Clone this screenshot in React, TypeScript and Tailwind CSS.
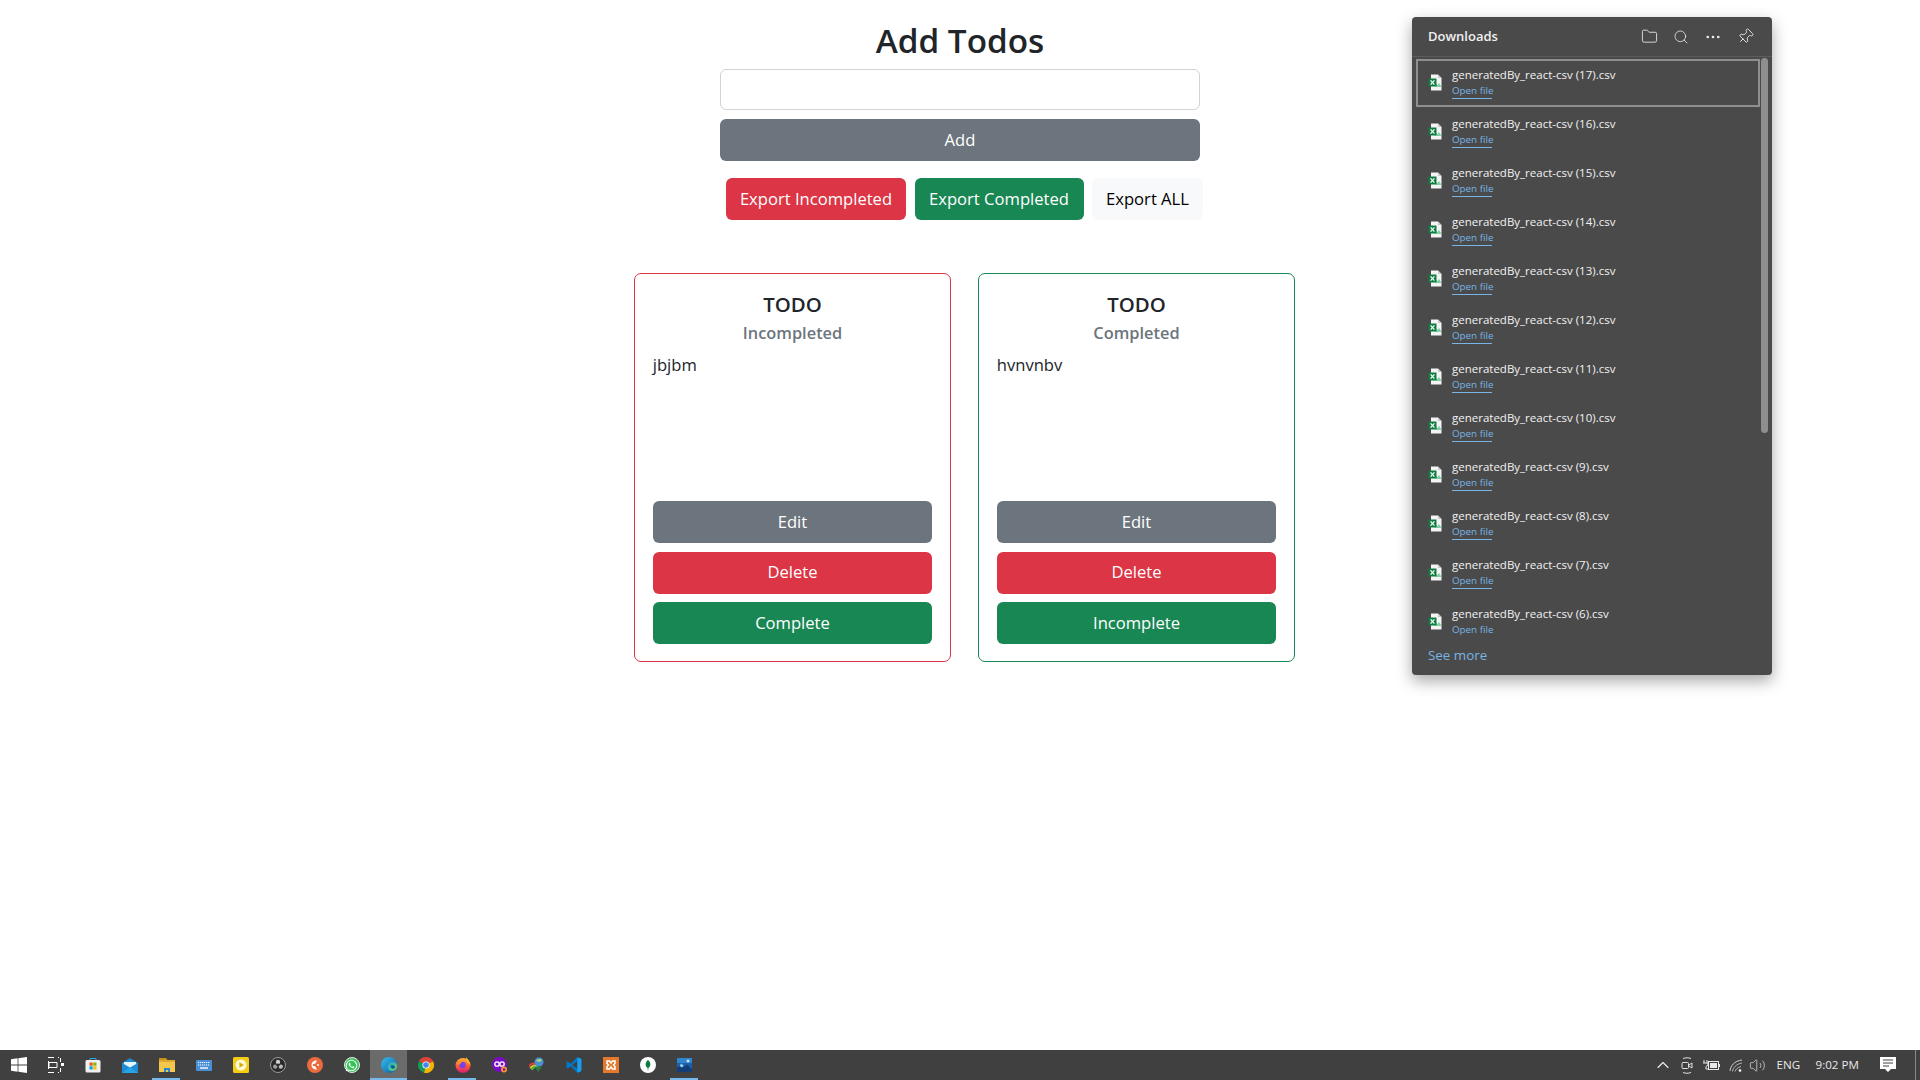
import React from "react";
import { FaWhatsapp } from "react-icons/fa";
import { Folder, Search, MoreHorizontal, Pin, ChevronUp, Volume2 } from "lucide-react";

const font = "font-['Open_Sans','Noto_Sans',sans-serif]";

function Btn({ bg, children }: { bg: string; children: React.ReactNode }) {
  return (
    <button className={`w-full h-[42px] rounded-[6px] text-white text-[16.6px] flex items-center justify-center ${bg}`}>
      {children}
    </button>
  );
}

function Card({ border, sub, item, last }: { border: string; sub: string; item: string; last: string }) {
  return (
    <div className={`w-[316.5px] h-[389px] rounded-[7px] border px-[17.5px] pt-[15px] pb-[17px] flex flex-col ${border}`}>
      <div className="text-center text-[20.4px] leading-[30px] font-semibold text-[#212529]">TODO</div>
      <div className="text-center text-[16.4px] leading-[27px] font-semibold text-[#6c757d]">{sub}</div>
      <div className="mt-[6px] text-[16.6px] leading-[26px] text-[#212529]">{item}</div>
      <div className="mt-auto flex flex-col gap-[8.5px]">
        <Btn bg="bg-[#6c757d]">Edit</Btn>
        <Btn bg="bg-[#dc3545]">Delete</Btn>
        <Btn bg="bg-[#198754]">{last}</Btn>
      </div>
    </div>
  );
}

function ExcelIcon() {
  return (
    <svg width="14" height="17" viewBox="0 0 14 17" className="shrink-0">
      <path d="M3 0.5h7l3.5 3.5v12.5H3z" fill="#f4f4f4" />
      <path d="M10 0.5v3.5h3.5z" fill="#c8c8c8" />
      <path d="M7.5 9l2 2 1.5-2 2 3v1H7.5z" fill="#7fd0a4" />
      <rect x="0.5" y="4.5" width="8" height="8" fill="#107c41" />
      <path d="M2.6 6.3l3.8 4.4M6.4 6.3l-3.8 4.4" stroke="#fff" strokeWidth="1.2" />
    </svg>
  );
}

function DownloadRow({ n, focused, underline }: { n: number; focused?: boolean; underline: boolean }) {
  return (
    <div className="relative h-[49px] w-[344px] flex items-start pl-[12px]">
      {focused && <div className="absolute left-0 top-0 w-[344px] h-[48px] border-2 border-[#8f8f8f]" />}
      <div className="mt-[15px]"><ExcelIcon /></div>
      <div className="ml-[10px] mt-[7px]">
        <div className="text-[11.5px] leading-[18px] text-[#f2f2f2] whitespace-nowrap">generatedBy_react-csv ({n}).csv</div>
        <div className={`w-[40px] text-[9.8px] leading-[14px] text-[#78b4e4] whitespace-nowrap ${underline ? "border-b border-[#78b4e4]" : ""}`}>Open file</div>
      </div>
    </div>
  );
}

function Slot({ active, hi, children }: { active?: boolean; hi?: boolean; children: React.ReactNode }) {
  return (
    <div className={`relative w-[37px] h-[30px] flex items-center justify-center shrink-0 ${hi ? "bg-[#6b6b6b]" : ""}`}>
      {children}
      {active && <div className={`absolute bottom-0 h-[2px] bg-[#76b9ed] ${hi ? "left-0 right-0" : "left-[4px] right-[5px]"}`} />}
    </div>
  );
}

function TaskIcons() {
  return (
    <>
      <Slot>
        <svg width="16" height="16" viewBox="0 0 16 16" fill="#fff"><path d="M0 2.2L6.6 1.3V7.6H0zM7.4 1.2L16 0V7.6H7.4zM0 8.4H6.6V14.7L0 13.8zM7.4 8.4H16V16L7.4 14.8z" /></svg>
      </Slot>
      <Slot>
        <svg width="16" height="16" viewBox="0 0 16 16" fill="none" stroke="#fff"><path d="M0 .5h6M10 .5h1M0 15.5h6M10 15.5h1M1 5.5h8v5H1zM.5 4v8M12.5 1v4M12.5 11v4" /><rect x="13" y="6" width="3" height="3" fill="#fff" stroke="none" /></svg>
      </Slot>
      <Slot>
        <svg width="16" height="16" viewBox="0 0 16 16"><path d="M5 3V1.5h6V3" stroke="#29a8e0" fill="none" /><rect x="0.5" y="3" width="15" height="12.5" rx="1.5" fill="#f0f0f0" /><rect x="4.5" y="5.5" width="3.2" height="3.2" fill="#f25022" /><rect x="8.3" y="5.5" width="3.2" height="3.2" fill="#7fba00" /><rect x="4.5" y="9.3" width="3.2" height="3.2" fill="#00a4ef" /><rect x="8.3" y="9.3" width="3.2" height="3.2" fill="#ffb900" /></svg>
      </Slot>
      <Slot>
        <svg width="16" height="15" viewBox="0 0 16 15"><path d="M0 5L8 0l8 5v10H0z" fill="#1e88d2" /><path d="M0 5h16v10H0z" fill="#27a3e6" /><path d="M0 5l8 5 8-5v10L8 9 0 15z" fill="#1578c2" opacity=".55" /><path d="M2 4h12v2L8 9.5 2 6z" fill="#e8f4fc" /></svg>
      </Slot>
      <Slot active>
        <svg width="16" height="16" viewBox="0 0 16 16"><path d="M0 1h7l1.5 2H0z" fill="#c98f1d" /><rect y="3" width="16" height="12" fill="#f4c84b" /><rect y="3" width="16" height="2" fill="#e0a92c" /><path d="M5 15v-4h6v4H9v-2H7v2z" fill="#2a86d1" /></svg>
      </Slot>
      <Slot>
        <svg width="16" height="11" viewBox="0 0 16 11"><rect x="0" y="0" width="16" height="11" rx="1" fill="#4a90d9" /><path d="M2 2.5h12M2 5h12" stroke="#fff" strokeDasharray="1.2 .8" /><path d="M4 8h8" stroke="#fff" strokeWidth="1.4" /></svg>
      </Slot>
      <Slot>
        <svg width="16" height="16" viewBox="0 0 16 16"><rect width="16" height="16" rx="1.5" fill="#f3cc13" /><circle cx="8" cy="8" r="5.5" fill="#fdf8d8" /><path d="M6.4 5.3L11 8l-4.6 2.7z" fill="#d9ac00" /></svg>
      </Slot>
      <Slot>
        <svg width="16" height="16" viewBox="0 0 16 16"><circle cx="8" cy="8" r="7.5" fill="#2a2a2a" stroke="#9a9a9a" /><circle cx="8" cy="5" r="2.2" fill="#cfcfcf" /><circle cx="5.2" cy="9.6" r="2.2" fill="#9f9f9f" /><circle cx="10.8" cy="9.6" r="2.2" fill="#bcbcbc" /><circle cx="8" cy="8" r="1.6" fill="#2a2a2a" /></svg>
      </Slot>
      <Slot>
        <svg width="16" height="16" viewBox="0 0 16 16"><circle cx="8" cy="8" r="8" fill="#ed6a3f" /><path d="M10 3.5A4.6 4.6 0 1 0 10 12.5L7.5 8z" fill="#fff" /><circle cx="11" cy="8" r="1" fill="#fff" /><circle cx="7" cy="8" r="1.2" fill="#ed6a3f" /></svg>
      </Slot>
      <Slot>
        <div className="w-[16px] h-[16px] rounded-full bg-[#36c45a] flex items-center justify-center border border-[#e8e8e8]">
          <FaWhatsapp className="text-white text-[13px]" />
        </div>
      </Slot>
      <Slot active hi>
        <svg width="16" height="16" viewBox="0 0 16 16">
          <defs>
            <linearGradient id="edgeA" x1="0" y1="0" x2="1" y2="1"><stop offset="0" stopColor="#35c1f1" /><stop offset="1" stopColor="#0c59a4" /></linearGradient>
            <linearGradient id="edgeB" x1="0" y1="0" x2="1" y2="1"><stop offset="0" stopColor="#1b9de2" /><stop offset="1" stopColor="#6fdc5a" /></linearGradient>
          </defs>
          <circle cx="8" cy="8" r="8" fill="url(#edgeA)" />
          <path d="M16 9c0-2.5-2-4-4.5-4C8 5 6 7.5 6.5 10.5 7 13.5 10.5 15 13 13.5 15 12.5 16 11 16 9z" fill="url(#edgeB)" />
          <path d="M10 8.5c2-.5 4 0 4 1.5s-2 2-3 1.5-1.5-2.5-1-3z" fill="#0c59a4" />
        </svg>
      </Slot>
      <Slot>
        <svg width="16" height="16" viewBox="0 0 16 16"><path d="M8 8L1 4.2A8 8 0 0 1 15 4.2z" fill="#db4437" /><path d="M1 4.2A8 8 0 0 0 6 15.8L8 8z" fill="#0f9d58" /><path d="M15 4.2A8 8 0 0 1 6 15.8L8 8z" fill="#f4b400" /><circle cx="8" cy="8" r="3.6" fill="#fff" /><circle cx="8" cy="8" r="2.8" fill="#4285f4" /></svg>
      </Slot>
      <Slot active>
        <svg width="16" height="16" viewBox="0 0 16 16">
          <defs><linearGradient id="ffx" x1="0" y1="0" x2="0" y2="1"><stop offset="0" stopColor="#ffb52e" /><stop offset=".55" stopColor="#ff5634" /><stop offset="1" stopColor="#d3187e" /></linearGradient></defs>
          <circle cx="8" cy="8.5" r="7.5" fill="url(#ffx)" /><path d="M11 0c2 2 4 5 4.5 8L12 5z" fill="#ffbd2e" /><circle cx="7.5" cy="8" r="3.2" fill="#7542e5" /><path d="M1 6c2-2 4-2 6-1L4 8z" fill="#ff8a2e" />
        </svg>
      </Slot>
      <Slot>
        <svg width="16" height="16" viewBox="0 0 16 16"><circle cx="7.5" cy="7.5" r="7.5" fill="#7a0bc0" /><circle cx="5" cy="7" r="2.2" fill="none" stroke="#fff" strokeWidth="1.3" /><circle cx="10" cy="7" r="2.2" fill="none" stroke="#fff" strokeWidth="1.3" /><circle cx="12" cy="12.5" r="3" fill="#f29a2e" /><circle cx="12" cy="12.5" r="1.2" fill="#7a0bc0" /></svg>
      </Slot>
      <Slot>
        <svg width="16" height="16" viewBox="0 0 16 16"><path d="M0 10a5 3.5 0 0 1 6-3.5" stroke="#e0403a" strokeWidth="2" fill="none" /><path d="M1.5 11.5a6 4 0 0 1 6-3" stroke="#f2c230" strokeWidth="2" fill="none" /><path d="M3 13a6 4 0 0 1 6-3.5" stroke="#4bb649" strokeWidth="2" fill="none" /><circle cx="10" cy="5" r="4.5" fill="#4b8fd6" /><path d="M7 4a3.5 3 0 0 1 6-1l-2 2z" fill="#a8d87a" /><path d="M6 10h7l-4 5z" fill="#2f7d32" /></svg>
      </Slot>
      <Slot>
        <svg width="16" height="16" viewBox="0 0 100 100"><path d="M71 1L96 13V87L71 99 29 58 11 72 3 68V32L11 28 29 42z" fill="#0078c8" /><path d="M71 26L38 50 71 74z" fill="#404040" /><path d="M71 1L96 13V87L71 99z" fill="#1f9ce8" /></svg>
      </Slot>
      <Slot>
        <svg width="16" height="16" viewBox="0 0 16 16"><rect width="16" height="16" fill="#e4792b" /><path d="M4 4h2.5L8 6l1.5-2H12v2.5L10.5 8l1.5 1.5V12H9.500L8 10l-1.500 2H4V9.500L5.500 8 4 6.500z" fill="none" stroke="#fff" strokeWidth="1.5" /></svg>
      </Slot>
      <Slot>
        <svg width="16" height="16" viewBox="0 0 16 16"><circle cx="8" cy="8" r="8" fill="#fff" /><path d="M8 2.8c2 2 2.600 3.500 2.300 5.200-.3 1.700-1.300 2.700-2.300 3.200-1-.5-2-1.500-2.300-3.200C5.400 6.300 6 4.800 8 2.800z" fill="#0f7a43" /><path d="M7.700 11h.6v2.200h-.6z" fill="#0f7a43" /></svg>
      </Slot>
      <Slot active>
        <svg width="15" height="14" viewBox="0 0 15 14"><rect width="15" height="14" fill="#1d5ea8" /><path d="M0 14V10l4.500-4.500L8 8.500l2-2 5 5V14z" fill="#123f7a" /><path d="M4.500 5.500L7 8l-2.500 1.500L2.500 7.500z" fill="#8fd2f5" /><rect width="15" height="5" fill="#3ca0e8" opacity=".6" /><path d="M11 1.500v3M9.500 3h3" stroke="#fff" /></svg>
      </Slot>
    </>
  );
}

function Tray() {
  return (
    <div className="ml-auto flex items-center h-full text-[#e8e8e8] text-[11.6px]">
      <div className="w-[24px] flex justify-center"><ChevronUp size={20} strokeWidth={1.4} color="#e8e8e8" /></div>
      <div className="w-[24px] flex justify-center">
        <svg width="12" height="17" viewBox="0 0 12 17" fill="none" stroke="#e0e0e0"><path d="M2 1.5c3-1 5-1 8 0M2 15.5c3 1 5 1 8 0" /><rect x="1" y="5.5" width="6.5" height="6" rx="1" /><path d="M8 8l3-2v5l-3-2" /></svg>
      </div>
      <div className="w-[25px] flex justify-center">
        <svg width="17" height="12" viewBox="0 0 17 12" fill="none" stroke="#e8e8e8"><path d="M1 1v3M4 1v3M0 4h5v2l-2 1.5V10h2" /><rect x="5.5" y="2.5" width="10" height="8" /><rect x="7" y="4" width="7" height="5" fill="#e8e8e8" stroke="none" /><path d="M16.5 5v3" /></svg>
      </div>
      <div className="w-[24px] flex justify-center">
        <svg width="14" height="13" viewBox="0 0 14 13" fill="none" stroke="#cfcfcf"><path d="M1 12C1.5 7 5 2 13 1" /><path d="M3.5 12.5C4 9 7 5 13 4" opacity=".8" /><path d="M6 12.5c.5-2 2.5-4 6-5" opacity=".8" /><circle cx="11" cy="11.5" r="1.3" fill="#fff" stroke="none" /></svg>
      </div>
      <div className="w-[18px] flex justify-center ml-[1px]"><Volume2 size={17} strokeWidth={1} color="#e8e8e8" /></div>
      <div className="ml-[10px] w-[23px] text-center">ENG</div>
      <div className="ml-[16px] w-[43px] text-center whitespace-nowrap">9:02 PM</div>
      <div className="ml-[20px] w-[18px] flex justify-center">
        <svg width="16" height="16" viewBox="0 0 16 16"><path d="M0 0h16v12h-5l-3 3-3-3H0z" fill="#fff" /><path d="M3 3h10M3 6h10M3 9h6" stroke="#404040" /></svg>
      </div>
      <div className="ml-[18.5px] w-[1px] h-full bg-[#8a8a8a]" />
      <div className="w-[4px]" />
    </div>
  );
}

export default function App() {
  const rows = [17, 16, 15, 14, 13, 12, 11, 10, 9, 8, 7, 6];
  return (
    <div className={`h-screen w-full flex flex-col overflow-hidden bg-white ${font}`}>
      <main className="relative flex-1 flex flex-col items-center pt-[19px]">
        <h1 className="text-[33.3px] leading-[42px] font-semibold text-[#212529]">Add Todos</h1>
        <div className="mt-[8px] w-[480px] flex flex-col">
          <input className="h-[41px] rounded-[6px] border border-[#ced4da] bg-white" />
          <button className="mt-[9px] h-[42px] rounded-[6px] bg-[#6c757d] text-white text-[16.6px]">Add</button>
        </div>
        <div className="mt-[17px] ml-[9px] flex gap-[8.5px]">
          <button className="h-[42px] w-[180px] rounded-[6px] bg-[#dc3545] text-white text-[16.6px] whitespace-nowrap">Export Incompleted</button>
          <button className="h-[42px] w-[169px] rounded-[6px] bg-[#198754] text-white text-[16.6px] whitespace-nowrap">Export Completed</button>
          <button className="h-[42px] w-[111px] rounded-[6px] bg-[#f8f9fa] text-black text-[16.6px] whitespace-nowrap">Export ALL</button>
        </div>
        <div className="mt-[53px] ml-[9px] flex gap-[27.5px]">
          <Card border="border-[#dc3545]" sub="Incompleted" item="jbjbm" last="Complete" />
          <Card border="border-[#198754]" sub="Completed" item="hvnvnbv" last="Incomplete" />
        </div>

        <aside className="absolute left-[1412px] top-[17px] w-[360px] h-[658px] rounded-[4px] bg-[#4a4a4a] shadow-[0_6px_16px_rgba(0,0,0,0.35)] flex flex-col overflow-hidden">
          <header className="h-[40px] shrink-0 flex items-center pl-[16px] border-b border-[#5c5c5c]">
            <div className="mt-[1px] text-[13px] font-semibold text-[#f0f0f0]">Downloads</div>
            <div className="ml-auto flex items-center">
              <div className="w-[32px] flex justify-center"><Folder size={17} strokeWidth={1.2} color="#eee" /></div>
              <div className="w-[32px] flex justify-center"><Search size={16} strokeWidth={1.2} color="#eee" /></div>
              <div className="w-[32px] flex justify-center"><MoreHorizontal size={18} strokeWidth={1.6} color="#eee" /></div>
              <div className="w-[33px] mr-[10px] flex justify-center"><Pin size={17} strokeWidth={1.2} color="#eee" className="rotate-45" /></div>
            </div>
          </header>
          <div className="relative flex-1 pl-[4px] pt-[2px] overflow-hidden">
            {rows.map((n, i) => (
              <DownloadRow key={n} n={n} focused={i === 0} underline={i !== rows.length - 1} />
            ))}
            <div className="absolute left-[349px] top-[1px] w-[7px] h-[375px] rounded-[4px] bg-[#8e8e8e]" />
          </div>
          <div className="h-[30px] shrink-0 pl-[16px] text-[13.4px] leading-[20px] text-[#78b4e4]">See more</div>
        </aside>
      </main>
      <footer className="h-[30px] shrink-0 bg-[#404040] flex items-center">
        <TaskIcons />
        <Tray />
      </footer>
    </div>
  );
}
